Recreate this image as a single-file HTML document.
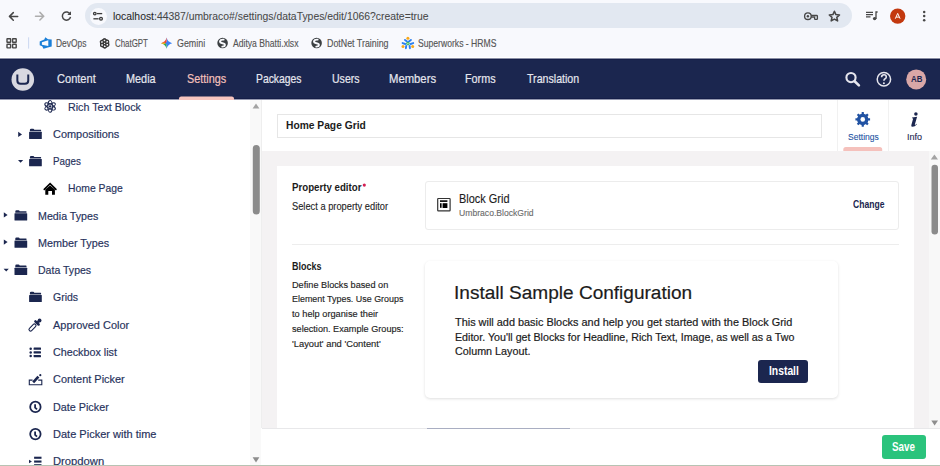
<!DOCTYPE html>
<html><head><meta charset="utf-8">
<style>
html,body{margin:0;padding:0;}
body{width:940px;height:466px;overflow:hidden;position:relative;background:#fff;font-family:"Liberation Sans",sans-serif;}
.a{position:absolute;}
.t{position:absolute;white-space:nowrap;transform-origin:0 0;font-family:"Liberation Sans",sans-serif;}
svg{position:absolute;overflow:visible;}
</style></head><body>
<!-- browser chrome -->
<div class="a" style="left:0;top:0;width:940px;height:58px;background:#f8f9fd;"></div>
<div class="a" style="left:85px;top:3px;width:767px;height:25px;border-radius:12.5px;background:#e2e8f1;"></div>
<div class="a" style="left:89.5px;top:7.8px;width:17px;height:17px;border-radius:50%;background:#f8f9fd;"></div>
<svg width="940" height="58" style="left:0;top:0">
  <!-- back -->
  <g stroke="#474747" stroke-width="1.5" fill="none" stroke-linecap="round" stroke-linejoin="round">
    <path d="M17.7 16.4H9.4M13.3 12.6L9.5 16.4L13.3 20.2"/>
  </g>
  <g stroke="#adadad" stroke-width="1.5" fill="none" stroke-linecap="round" stroke-linejoin="round">
    <path d="M35.5 16.2H43.8M39.9 12.4L43.7 16.2L39.9 20"/>
  </g>
  <!-- reload -->
  <path d="M70.2 14.3A4.1 4.1 0 1 0 70.5 16.8" stroke="#474747" stroke-width="1.5" fill="none"/>
  <path d="M71 11.3V15H67.3Z" fill="#474747"/>
  <!-- tune icon -->
  <g stroke="#3c3c3c" stroke-width="1.3" fill="none">
    <circle cx="94.8" cy="13.6" r="1.3"/>
    <path d="M97 13.6H102.2"/>
    <circle cx="101" cy="18.8" r="1.4"/>
    <path d="M93.4 18.8H98.6"/>
  </g>
  <!-- key -->
  <circle cx="807.9" cy="16.2" r="3.3" stroke="#474747" stroke-width="1.35" fill="none"/>
  <path d="M811.1 15.5H816.6Q817.4 15.5 817.4 16.3V18.7Q817.4 19.4 816.6 19.4H815.3Q814.6 19.4 814.6 18.7V17.2H811.1" stroke="#474747" stroke-width="1.3" fill="none"/>
  <circle cx="807.9" cy="16.2" r="1.2" fill="#474747"/>
  <!-- star -->
  <path d="M834.4 11.3L835.9 14.6L839.5 15L836.8 17.4L837.6 20.9L834.4 19.1L831.2 20.9L832 17.4L829.3 15L832.9 14.6Z" fill="none" stroke="#474747" stroke-width="1.55" stroke-linejoin="round"/>
  <!-- media -->
  <g stroke="#474747" stroke-width="1.3">
    <path d="M866 12.3H873M866 14.6H873M866 16.9H870.5"/>
    <path d="M876 19V12H877.6" fill="none"/>
  </g>
  <circle cx="874.6" cy="18.6" r="1.7" fill="#474747"/>
  <!-- avatar -->
  <circle cx="897.7" cy="16.1" r="7.7" fill="#c3390f"/>
  <path d="M895.3 18.7L897.7 13.4L900.1 18.7M896.2 17.1H899.2" stroke="#fff" stroke-width="1" fill="none"/>
  <!-- kebab -->
  <circle cx="924.2" cy="12" r="1.25" fill="#474747"/>
  <circle cx="924.2" cy="16.1" r="1.25" fill="#474747"/>
  <circle cx="924.2" cy="20.3" r="1.25" fill="#474747"/>
  <!-- apps grid -->
  <g stroke="#474747" stroke-width="1.4" fill="none">
    <rect x="7" y="38.7" width="3.6" height="3.6" rx="0.4"/>
    <rect x="12.6" y="38.7" width="3.6" height="3.6" rx="0.4"/>
    <rect x="7" y="44.3" width="3.6" height="3.6" rx="0.4"/>
    <rect x="12.6" y="44.3" width="3.6" height="3.6" rx="0.4"/>
  </g>
  <rect x="28.2" y="37.3" width="0.9" height="11.3" fill="#c6d4ef"/>
  <!-- devops -->
  <path fill-rule="evenodd" d="M45.3 37.3L48 39.2L51.7 39.5V46.6L47.8 47.5L43.5 48.8L42.2 46.2L39.7 45.2V41.4L44.3 39.6ZM41.9 42.2V44.8L48.3 46.1V40.3Z" fill="#1a7fd8"/>
  <!-- chatgpt -->
  <g transform="translate(104.6 43.4)" fill="none" stroke="#3a3a3a" stroke-width="1.1">
    <rect x="-1.45" y="-3.6" width="2.9" height="6.2" rx="1.45" transform="rotate(0) translate(2.6 0.3)"/><rect x="-1.45" y="-3.6" width="2.9" height="6.2" rx="1.45" transform="rotate(60) translate(2.6 0.3)"/><rect x="-1.45" y="-3.6" width="2.9" height="6.2" rx="1.45" transform="rotate(120) translate(2.6 0.3)"/><rect x="-1.45" y="-3.6" width="2.9" height="6.2" rx="1.45" transform="rotate(180) translate(2.6 0.3)"/><rect x="-1.45" y="-3.6" width="2.9" height="6.2" rx="1.45" transform="rotate(240) translate(2.6 0.3)"/><rect x="-1.45" y="-3.6" width="2.9" height="6.2" rx="1.45" transform="rotate(300) translate(2.6 0.3)"/>
  </g>
  <!-- gemini -->
  <g transform="translate(166.6 43.2)">
    <path d="M0 -5.6Q1.1 -1.1 5.6 0Q1.1 1.1 0 5.6L0 0Z" fill="#3b82f6"/>
    <path d="M0 5.6Q-1.1 1.1 -5.6 0L0 0Z" fill="#2ea85a"/>
    <path d="M-5.6 0Q-1.1 -1.1 0 -5.6L0 0Z" fill="#e8453c"/>
    <path d="M-5.6 0Q-3.4 -0.5 -2.3 -1L-1.6 0L-2.3 1Q-3.4 0.5 -5.6 0Z" fill="#f5b50f"/>
    <path d="M0 -1.4L1.3 0L0 1.4L-0.9 0Z" fill="#3b82f6"/>
  </g>
  <!-- globes -->
  <g>
    <circle cx="222.6" cy="43" r="5.3" fill="#3c4043"/>
    <path d="M223.6 39.6Q220.4 39.4 220 41.3Q219.9 42.9 222.5 43.2Q225 43.6 224.9 45.1Q224.7 46.5 222.3 46.6" stroke="#f8f9fd" stroke-width="1.9" fill="none" stroke-linecap="round"/>
  </g>
  <g transform="translate(94 0)">
    <circle cx="222.6" cy="43" r="5.3" fill="#3c4043"/>
    <path d="M223.6 39.6Q220.4 39.4 220 41.3Q219.9 42.9 222.5 43.2Q225 43.6 224.9 45.1Q224.7 46.5 222.3 46.6" stroke="#f8f9fd" stroke-width="1.9" fill="none" stroke-linecap="round"/>
  </g>
  <!-- superworks -->
  <g stroke="#2a7ff0" stroke-width="1.9" stroke-linecap="round">
    <path d="M405 39.9L407 41.4M410.9 39.9L408.9 41.4M402.6 43.1L405.3 44M413.2 43.1L410.6 44M406.2 45.9L405.9 48.2M409.6 45.9L409.9 48.2"/>
  </g>
  <circle cx="407.9" cy="38.3" r="1.5" fill="#f7a81b"/>
  <circle cx="403" cy="46.4" r="1.5" fill="#f7a81b"/>
  <circle cx="412.7" cy="46.5" r="1.5" fill="#f7a81b"/>
  <circle cx="407.9" cy="43.6" r="1.8" fill="#3fb66a"/>
  <circle cx="407.9" cy="43.6" r="0.7" fill="#d8f0c8"/>
</svg>
<!-- umbraco header -->
<div class="a" style="left:0;top:57px;width:940px;height:1px;background:#ffffff;"></div>
<div class="a" style="left:0;top:58px;width:940px;height:1px;background:#8a8fa6;"></div>
<div class="a" style="left:0;top:59px;width:940px;height:40px;background:#1b264f;"></div>
<div class="a" style="left:0;top:59px;width:940px;height:1px;background:#141d47;"></div>
<div class="a" style="left:0;top:98px;width:940px;height:1px;background:#141d47;"></div>
<div class="a" style="left:0;top:99px;width:940px;height:1px;background:#9599b0;"></div>
<svg width="940" height="42" style="left:0;top:58px">
  <circle cx="22.8" cy="21.5" r="11.3" fill="#d8d8e0"/>
  <path d="M17.35 16.6V22.4Q17.35 25.7 20.65 25.7H24.95Q28.25 25.7 28.25 22.4V16.6" stroke="#1b264f" stroke-width="2" fill="none"/>
  <path d="M179 42V40.6Q179 38.4 181.2 38.4H231.8Q234 38.4 234 40.6V42Z" fill="#f7c5bf"/>
  <!-- search -->
  <circle cx="851" cy="19.6" r="4.6" stroke="#e6e6ee" stroke-width="2.1" fill="none"/>
  <path d="M854.6 23.2L858.9 27.4" stroke="#e6e6ee" stroke-width="2.6" stroke-linecap="round"/>
  <!-- help -->
  <circle cx="883.9" cy="21.2" r="6.7" stroke="#e6e6ee" stroke-width="1.5" fill="none"/>
  <path d="M881.6 19.3Q881.6 16.8 884 16.8Q886.3 16.8 886.3 19Q886.3 20.3 884.8 21Q883.9 21.5 883.9 22.8" stroke="#e6e6ee" stroke-width="1.6" fill="none"/>
  <circle cx="883.9" cy="25.2" r="1" fill="#e6e6ee"/>
  <!-- AB avatar -->
  <circle cx="916.2" cy="21.4" r="10" fill="#d9a7a7"/>
</svg>


<!-- left tree -->
<div class="a" style="left:250px;top:100px;width:11px;height:366px;background:#f9f9f9;"></div>
<svg width="262" height="367" style="left:0;top:99px">
  <path d="M252.6 9.5L256 4.5L259.4 9.5Z" fill="#a3a3a3"/>
  <rect x="252.8" y="45.9" width="7" height="69.5" rx="3.5" fill="#8b8b8b"/>
  <path d="M252.6 358.2L256 363.4L259.4 358.2Z" fill="#8d8d8d"/>
</svg>
<svg width="250" height="466" style="left:0;top:0" id="treeicons">
  <g fill="#1b264f">
    <!-- atom -->
    <g transform="translate(50.1 106.4)" stroke="#1b264f" stroke-width="1.05" fill="none">
      <ellipse rx="5.9" ry="2.3" transform="rotate(90)"/>
      <ellipse rx="5.9" ry="2.3" transform="rotate(30)"/>
      <ellipse rx="5.9" ry="2.3" transform="rotate(-30)"/>
    </g>
    <circle cx="50.1" cy="106.4" r="1.2"/>
    <path d="M18.2 131.8L22 134.4L18.2 137.1Z"/>
    <g transform="translate(29.1 128.7)"><path d="M0.8 2.6V1.2Q0.8 0 2 0H4Q4.9 0 5.2 1H11.6Q12 1 12 1.4V2.6Z"/>
      <rect x="0" y="3.1" width="12.7" height="7.2" rx="0.5"/></g>
    <path d="M18 159.9L23.2 159.9L20.6 162.7Z"/>
    <g transform="translate(29.1 155.9)"><path d="M0.8 2.6V1.2Q0.8 0 2 0H4Q4.9 0 5.2 1H11.6Q12 1 12 1.4V2.6Z"/>
      <rect x="0" y="3.1" width="12.7" height="7.2" rx="0.5"/></g>
    <!-- house -->
    <path d="M44.3 189.3L50.1 183.6L55.9 189.3" stroke="#000" stroke-width="1.7" fill="none" stroke-linecap="round"/>
    <path d="M45.3 194.8V189.6L50.1 185.4L54.9 189.6V194.8H52V191H48.3V194.8Z" fill="#000"/>
    <path d="M3.8 212.3L7.6 214.9L3.8 217.6Z"/>
    <g transform="translate(14.5 210.2)"><path d="M0.8 2.6V1.2Q0.8 0 2 0H4Q4.9 0 5.2 1H11.6Q12 1 12 1.4V2.6Z"/>
      <rect x="0" y="3.1" width="12.7" height="7.2" rx="0.5"/></g>
    <path d="M3.8 239.5L7.6 242.1L3.8 244.8Z"/>
    <g transform="translate(14.5 237.4)"><path d="M0.8 2.6V1.2Q0.8 0 2 0H4Q4.9 0 5.2 1H11.6Q12 1 12 1.4V2.6Z"/>
      <rect x="0" y="3.1" width="12.7" height="7.2" rx="0.5"/></g>
    <path d="M3.6 268.8L8.8 268.8L6.2 271.6Z"/>
    <g transform="translate(14.5 264.6)"><path d="M0.8 2.6V1.2Q0.8 0 2 0H4Q4.9 0 5.2 1H11.6Q12 1 12 1.4V2.6Z"/>
      <rect x="0" y="3.1" width="12.7" height="7.2" rx="0.5"/></g>
    <g transform="translate(29.1 291.8)"><path d="M0.8 2.6V1.2Q0.8 0 2 0H4Q4.9 0 5.2 1H11.6Q12 1 12 1.4V2.6Z"/>
      <rect x="0" y="3.1" width="12.7" height="7.2" rx="0.5"/></g>
    <!-- eyedropper -->
    <rect x="-4.3" y="-1.55" width="8.6" height="3.1" rx="1.55" transform="translate(32.5 327.5) rotate(-45)" stroke="#1b264f" stroke-width="1.1" fill="none"/>
    <path d="M35.4 321.3L38.6 324.5" stroke="#1b264f" stroke-width="2.5" stroke-linecap="round"/>
    <path d="M37 322.9L39.4 320.6" stroke="#1b264f" stroke-width="2.3"/>
    <circle cx="39.6" cy="320.5" r="1.9"/>
    <!-- checkbox list -->
    <circle cx="30.7" cy="348.7" r="1.25"/>
    <circle cx="30.7" cy="352.4" r="1.25"/>
    <circle cx="30.7" cy="356.1" r="1.25"/>
    <rect x="33.6" y="347.6" width="7.4" height="2.2" rx="0.4"/>
    <rect x="33.6" y="351.3" width="7.4" height="2.2" rx="0.4"/>
    <rect x="33.6" y="355" width="7.4" height="2.2" rx="0.4"/>
    <!-- content picker -->
    <path d="M32.6 380.1H29.3V384.7H41.8V380.1H38.2" stroke="#1b264f" stroke-width="1.1" fill="none"/>
    <path d="M33.2 382.4L38.4 376.7" stroke="#1b264f" stroke-width="2.6"/>
    <circle cx="40.3" cy="375.2" r="1.1"/>
    <!-- clocks -->
    <g stroke="#1b264f" stroke-width="1.8" fill="none">
      <circle cx="35.4" cy="406.9" r="5.2"/>
      <path d="M35.1 404.3V407.6L37 409.4"/>
      <circle cx="35.4" cy="434.1" r="5.2"/>
      <path d="M35.1 431.5V434.8L37 436.6"/>
    </g>
    <!-- dropdown -->
    <path d="M29 459.7L31.9 461.5L29 463.3Z"/>
    <rect x="34.1" y="456.7" width="7.4" height="2.1"/>
    <rect x="34.1" y="460.5" width="7.4" height="2.1"/>
    <rect x="34.1" y="464.2" width="7.4" height="2.1"/>
  </g>
</svg>

<!-- main -->
<div class="a" style="left:262px;top:100px;width:678px;height:51px;background:#fff;"></div>
<div class="a" style="left:262px;top:151px;width:667px;height:277px;background:#f4f2f3;"></div>
<div class="a" style="left:261px;top:100px;width:1px;height:328px;background:#eeeeee;"></div>
<div class="a" style="left:277px;top:113.5px;width:543px;height:22px;border:1px solid #e6e6e6;background:#fff;"></div>
<div class="a" style="left:836.5px;top:100px;width:1px;height:51px;background:#f1f1f1;"></div>
<div class="a" style="left:888px;top:100px;width:1px;height:51px;background:#f1f1f1;"></div>
<svg width="940" height="60" style="left:0;top:99px">
  <!-- gear -->
  <g transform="translate(862.75 20.4)" fill="#2152a3">
    <path d="M-1.21 -5.26L-1.03 -7.33L1.03 -7.33L1.21 -5.26L2.86 -4.58L4.45 -5.91L5.91 -4.45L4.58 -2.86L5.26 -1.21L7.33 -1.03L7.33 1.03L5.26 1.21L4.58 2.86L5.91 4.45L4.45 5.91L2.86 4.58L1.21 5.26L1.03 7.33L-1.03 7.33L-1.21 5.26L-2.86 4.58L-4.45 5.91L-5.91 4.45L-4.58 2.86L-5.26 1.21L-7.33 1.03L-7.33 -1.03L-5.26 -1.21L-4.58 -2.86L-5.91 -4.45L-4.45 -5.91L-2.86 -4.58Z"/>
    <circle r="5.6"/>
    <circle r="2.3" fill="#fff"/>
  </g>
  <path d="M843.3 52V50.5Q843.3 48 845.8 48H879.7Q882.2 48 882.2 50.5V52Z" fill="#f5c1bc"/>
</svg>
<svg width="940" height="150" style="left:0;top:0"><circle cx="915.9" cy="113.9" r="1.75" fill="#1b264f"/><path d="M912.1 117.4L917.1 116.8L914.9 124.3Q914.7 125.2 915.5 124.7L916.5 123.8L916.9 124.3Q914.8 126.8 912.6 126.8Q910.9 126.8 911.3 125.2L913.1 118.8Q913.2 118.2 912 118.3Z" fill="#1b264f"/></svg>

<!-- content panel -->
<div class="a" style="left:277px;top:166px;width:637px;height:262px;background:#fff;"></div>
<div class="a" style="left:424.5px;top:181px;width:472.8px;height:46.5px;border:1px solid #ececec;border-radius:3px;"></div>
<svg width="20" height="20" style="left:436px;top:197px">
  <rect x="1.7" y="1.5" width="12.4" height="12.4" rx="0.6" fill="none" stroke="#333" stroke-width="1.2"/>
  <rect x="4" y="3.3" width="7.4" height="1.6" fill="#000"/>
  <rect x="4" y="6.2" width="1.6" height="4.6" fill="#000"/>
  <rect x="6.6" y="6.2" width="4.8" height="4.8" fill="#000"/>
</svg>
<div class="a" style="left:292px;top:244px;width:607px;height:1px;background:#ededed;"></div>
<div class="a" style="left:424.8px;top:260.6px;width:413px;height:137px;border-radius:5px;background:#fff;box-shadow:0 1px 3px rgba(0,0,0,0.13);"></div>
<div class="a" style="left:758.4px;top:359.7px;width:49.8px;height:23.7px;border-radius:3px;background:#1b264f;"></div>

<!-- right scrollbar -->
<div class="a" style="left:929px;top:151px;width:11px;height:277px;background:#f8f8f8;"></div>
<svg width="11" height="277" style="left:929px;top:151px">
  <path d="M1.8 8.4L5.4 3.6L9 8.4Z" fill="#a3a3a3"/>
  <rect x="2.5" y="13.8" width="6.5" height="69.6" rx="3.25" fill="#8b8b8b"/>
  <path d="M2.3 269.6L5.6 274.6L9 269.6Z" fill="#8d8d8d"/>
</svg>

<!-- footer -->
<div class="a" style="left:262px;top:428px;width:678px;height:37px;background:#fff;border-top:1px solid #e8e8ea;box-sizing:border-box;"></div>
<div class="a" style="left:427.2px;top:427.5px;width:143px;height:1.2px;background:#a9aec2;"></div>
<div class="a" style="left:882px;top:435.2px;width:43.6px;height:23.8px;border-radius:3px;background:#2bc37c;"></div>

<svg width="10" height="10" style="left:360px;top:180px"><circle cx="4.3" cy="5.1" r="1.6" fill="#d42054"/></svg>
<span class="t" style="left:113.00px;top:10.97px;font-size:11.8px;line-height:11.8px;font-weight:400;color:#474747;transform:scaleX(0.8806);-webkit-text-stroke:0.05px #474747;"><span style="color:#1f1f1f">localhost</span>:44387/umbraco#/settings/dataTypes/edit/1066?create=true</span>
<span class="t" style="left:55.90px;top:38.02px;font-size:10.8px;line-height:10.8px;font-weight:400;color:#555555;transform:scaleX(0.7777);-webkit-text-stroke:0.15px #555555;">DevOps</span>
<span class="t" style="left:114.60px;top:38.02px;font-size:10.8px;line-height:10.8px;font-weight:400;color:#555555;transform:scaleX(0.7312);-webkit-text-stroke:0.15px #555555;">ChatGPT</span>
<span class="t" style="left:176.80px;top:38.02px;font-size:10.8px;line-height:10.8px;font-weight:400;color:#555555;transform:scaleX(0.8225);-webkit-text-stroke:0.15px #555555;">Gemini</span>
<span class="t" style="left:233.00px;top:38.02px;font-size:10.8px;line-height:10.8px;font-weight:400;color:#555555;transform:scaleX(0.7958);-webkit-text-stroke:0.15px #555555;">Aditya Bhatti.xlsx</span>
<span class="t" style="left:327.40px;top:38.02px;font-size:10.8px;line-height:10.8px;font-weight:400;color:#555555;transform:scaleX(0.8204);-webkit-text-stroke:0.15px #555555;">DotNet Training</span>
<span class="t" style="left:417.90px;top:38.02px;font-size:10.8px;line-height:10.8px;font-weight:400;color:#555555;transform:scaleX(0.7974);-webkit-text-stroke:0.15px #555555;">Superworks - HRMS</span>
<span class="t" style="left:56.70px;top:73.12px;font-size:12.8px;line-height:12.8px;font-weight:400;color:#e6e6ee;transform:scaleX(0.8638);-webkit-text-stroke:0.2px #e6e6ee;">Content</span>
<span class="t" style="left:125.95px;top:73.12px;font-size:12.8px;line-height:12.8px;font-weight:400;color:#e6e6ee;transform:scaleX(0.8492);-webkit-text-stroke:0.2px #e6e6ee;">Media</span>
<span class="t" style="left:187.20px;top:73.12px;font-size:12.8px;line-height:12.8px;font-weight:400;color:#f5c1bc;transform:scaleX(0.8464);-webkit-text-stroke:0.2px #f5c1bc;">Settings</span>
<span class="t" style="left:256.19px;top:73.12px;font-size:12.8px;line-height:12.8px;font-weight:400;color:#e6e6ee;transform:scaleX(0.8084);-webkit-text-stroke:0.2px #e6e6ee;">Packages</span>
<span class="t" style="left:331.60px;top:73.12px;font-size:12.8px;line-height:12.8px;font-weight:400;color:#e6e6ee;transform:scaleX(0.8238);-webkit-text-stroke:0.2px #e6e6ee;">Users</span>
<span class="t" style="left:388.52px;top:73.12px;font-size:12.8px;line-height:12.8px;font-weight:400;color:#e6e6ee;transform:scaleX(0.8819);-webkit-text-stroke:0.2px #e6e6ee;">Members</span>
<span class="t" style="left:465.16px;top:73.12px;font-size:12.8px;line-height:12.8px;font-weight:400;color:#e6e6ee;transform:scaleX(0.8435);-webkit-text-stroke:0.2px #e6e6ee;">Forms</span>
<span class="t" style="left:526.70px;top:73.12px;font-size:12.8px;line-height:12.8px;font-weight:400;color:#e6e6ee;transform:scaleX(0.8308);-webkit-text-stroke:0.2px #e6e6ee;">Translation</span>
<span class="t" style="left:67.60px;top:101.97px;font-size:11.8px;line-height:11.8px;font-weight:400;color:#27325c;transform:scaleX(0.9066);-webkit-text-stroke:0.18px #27325c;">Rich Text Block</span>
<span class="t" style="left:52.50px;top:128.97px;font-size:11.8px;line-height:11.8px;font-weight:400;color:#27325c;transform:scaleX(0.9278);-webkit-text-stroke:0.18px #27325c;">Compositions</span>
<span class="t" style="left:52.50px;top:155.97px;font-size:11.8px;line-height:11.8px;font-weight:400;color:#27325c;transform:scaleX(0.8316);-webkit-text-stroke:0.18px #27325c;">Pages</span>
<span class="t" style="left:67.60px;top:182.97px;font-size:11.8px;line-height:11.8px;font-weight:400;color:#27325c;transform:scaleX(0.8783);-webkit-text-stroke:0.18px #27325c;">Home Page</span>
<span class="t" style="left:37.80px;top:210.97px;font-size:11.8px;line-height:11.8px;font-weight:400;color:#27325c;transform:scaleX(0.9047);-webkit-text-stroke:0.18px #27325c;">Media Types</span>
<span class="t" style="left:37.80px;top:237.97px;font-size:11.8px;line-height:11.8px;font-weight:400;color:#27325c;transform:scaleX(0.9140);-webkit-text-stroke:0.18px #27325c;">Member Types</span>
<span class="t" style="left:37.80px;top:264.97px;font-size:11.8px;line-height:11.8px;font-weight:400;color:#27325c;transform:scaleX(0.8934);-webkit-text-stroke:0.18px #27325c;">Data Types</span>
<span class="t" style="left:52.50px;top:291.97px;font-size:11.8px;line-height:11.8px;font-weight:400;color:#27325c;transform:scaleX(0.8909);-webkit-text-stroke:0.18px #27325c;">Grids</span>
<span class="t" style="left:52.50px;top:319.97px;font-size:11.8px;line-height:11.8px;font-weight:400;color:#27325c;transform:scaleX(0.9300);-webkit-text-stroke:0.18px #27325c;">Approved Color</span>
<span class="t" style="left:52.50px;top:346.97px;font-size:11.8px;line-height:11.8px;font-weight:400;color:#27325c;transform:scaleX(0.9115);-webkit-text-stroke:0.18px #27325c;">Checkbox list</span>
<span class="t" style="left:52.50px;top:373.97px;font-size:11.8px;line-height:11.8px;font-weight:400;color:#27325c;transform:scaleX(0.9271);-webkit-text-stroke:0.18px #27325c;">Content Picker</span>
<span class="t" style="left:52.70px;top:401.97px;font-size:11.8px;line-height:11.8px;font-weight:400;color:#27325c;transform:scaleX(0.9141);-webkit-text-stroke:0.18px #27325c;">Date Picker</span>
<span class="t" style="left:52.70px;top:428.97px;font-size:11.8px;line-height:11.8px;font-weight:400;color:#27325c;transform:scaleX(0.9341);-webkit-text-stroke:0.18px #27325c;">Date Picker with time</span>
<span class="t" style="left:52.70px;top:455.97px;font-size:11.8px;line-height:11.8px;font-weight:400;color:#27325c;transform:scaleX(0.9528);-webkit-text-stroke:0.18px #27325c;">Dropdown</span>
<span class="t" style="left:286.00px;top:120.48px;font-size:11.2px;line-height:11.2px;font-weight:700;color:#1b1b1b;transform:scaleX(0.9163);">Home Page Grid</span>
<span class="t" style="left:847.60px;top:132.47px;font-size:9.8px;line-height:9.8px;font-weight:400;color:#2152a3;transform:scaleX(0.8704);-webkit-text-stroke:0.1px #2152a3;">Settings</span>
<span class="t" style="left:906.60px;top:132.47px;font-size:9.8px;line-height:9.8px;font-weight:400;color:#1b264f;transform:scaleX(0.9176);-webkit-text-stroke:0.1px #1b264f;">Info</span>
<span class="t" style="left:292.00px;top:182.48px;font-size:11.2px;line-height:11.2px;font-weight:700;color:#1b1b1b;transform:scaleX(0.8659);">Property editor</span>
<span class="t" style="left:292.00px;top:200.59px;font-size:10.6px;line-height:10.6px;font-weight:400;color:#1e1e1e;transform:scaleX(0.8773);-webkit-text-stroke:0.12px #1e1e1e;">Select a property editor</span>
<span class="t" style="left:459.00px;top:193.88px;font-size:11.9px;line-height:11.9px;font-weight:400;color:#1b1b1b;transform:scaleX(0.9202);-webkit-text-stroke:0.12px #1b1b1b;">Block Grid</span>
<span class="t" style="left:459.00px;top:207.59px;font-size:9.9px;line-height:9.9px;font-weight:400;color:#6a6a6a;transform:scaleX(0.8718);-webkit-text-stroke:0.12px #6a6a6a;">Umbraco.BlockGrid</span>
<span class="t" style="left:852.80px;top:200.16px;font-size:10.4px;line-height:10.4px;font-weight:700;color:#1b264f;transform:scaleX(0.8246);">Change</span>
<span class="t" style="left:292.30px;top:262.33px;font-size:10.2px;line-height:10.2px;font-weight:700;color:#1b1b1b;transform:scaleX(0.8802);">Blocks</span>
<span class="t" style="left:292.30px;top:279.75px;font-size:9.7px;line-height:9.7px;font-weight:400;color:#1e1e1e;transform:scaleX(0.9458);-webkit-text-stroke:0.15px #1e1e1e;">Define Blocks based on</span>
<span class="t" style="left:292.30px;top:294.36px;font-size:9.7px;line-height:9.7px;font-weight:400;color:#1e1e1e;transform:scaleX(0.9208);-webkit-text-stroke:0.15px #1e1e1e;">Element Types. Use Groups</span>
<span class="t" style="left:292.30px;top:309.15px;font-size:9.7px;line-height:9.7px;font-weight:400;color:#1e1e1e;transform:scaleX(0.9523);-webkit-text-stroke:0.15px #1e1e1e;">to help organise their</span>
<span class="t" style="left:292.30px;top:323.86px;font-size:9.7px;line-height:9.7px;font-weight:400;color:#1e1e1e;transform:scaleX(0.9425);-webkit-text-stroke:0.15px #1e1e1e;">selection. Example Groups:</span>
<span class="t" style="left:292.30px;top:338.75px;font-size:9.7px;line-height:9.7px;font-weight:400;color:#1e1e1e;transform:scaleX(0.9641);-webkit-text-stroke:0.15px #1e1e1e;">'Layout' and 'Content'</span>
<span class="t" style="left:454.21px;top:282.68px;font-size:19.2px;line-height:19.2px;font-weight:400;color:#1b1b1b;transform:scaleX(0.9924);-webkit-text-stroke:0.2px #1b1b1b;">Install Sample Configuration</span>
<span class="t" style="left:455.40px;top:317.39px;font-size:11.3px;line-height:11.3px;font-weight:400;color:#1b1b1b;transform:scaleX(0.9643);-webkit-text-stroke:0.2px #1b1b1b;">This will add basic Blocks and help you get started with the Block Grid</span>
<span class="t" style="left:455.40px;top:332.39px;font-size:11.3px;line-height:11.3px;font-weight:400;color:#1b1b1b;transform:scaleX(0.9434);-webkit-text-stroke:0.2px #1b1b1b;">Editor. You'll get Blocks for Headline, Rich Text, Image, as well as a Two</span>
<span class="t" style="left:455.20px;top:346.39px;font-size:11.3px;line-height:11.3px;font-weight:400;color:#1b1b1b;transform:scaleX(0.9534);-webkit-text-stroke:0.2px #1b1b1b;">Column Layout.</span>
<span class="t" style="left:768.50px;top:365.46px;font-size:12.4px;line-height:12.4px;font-weight:700;color:#ffffff;transform:scaleX(0.8342);">Install</span>
<span class="t" style="left:910.70px;top:75.18px;font-size:9.2px;line-height:9.2px;font-weight:700;color:#1b264f;transform:scaleX(0.8581);">AB</span>
<span class="t" style="left:892.30px;top:441.11px;font-size:12.1px;line-height:12.1px;font-weight:700;color:#ffffff;transform:scaleX(0.8135);">Save</span>
<div class="a" style="left:0;top:465px;width:940px;height:1px;background:#b7c3b3;"></div>

</body></html>
